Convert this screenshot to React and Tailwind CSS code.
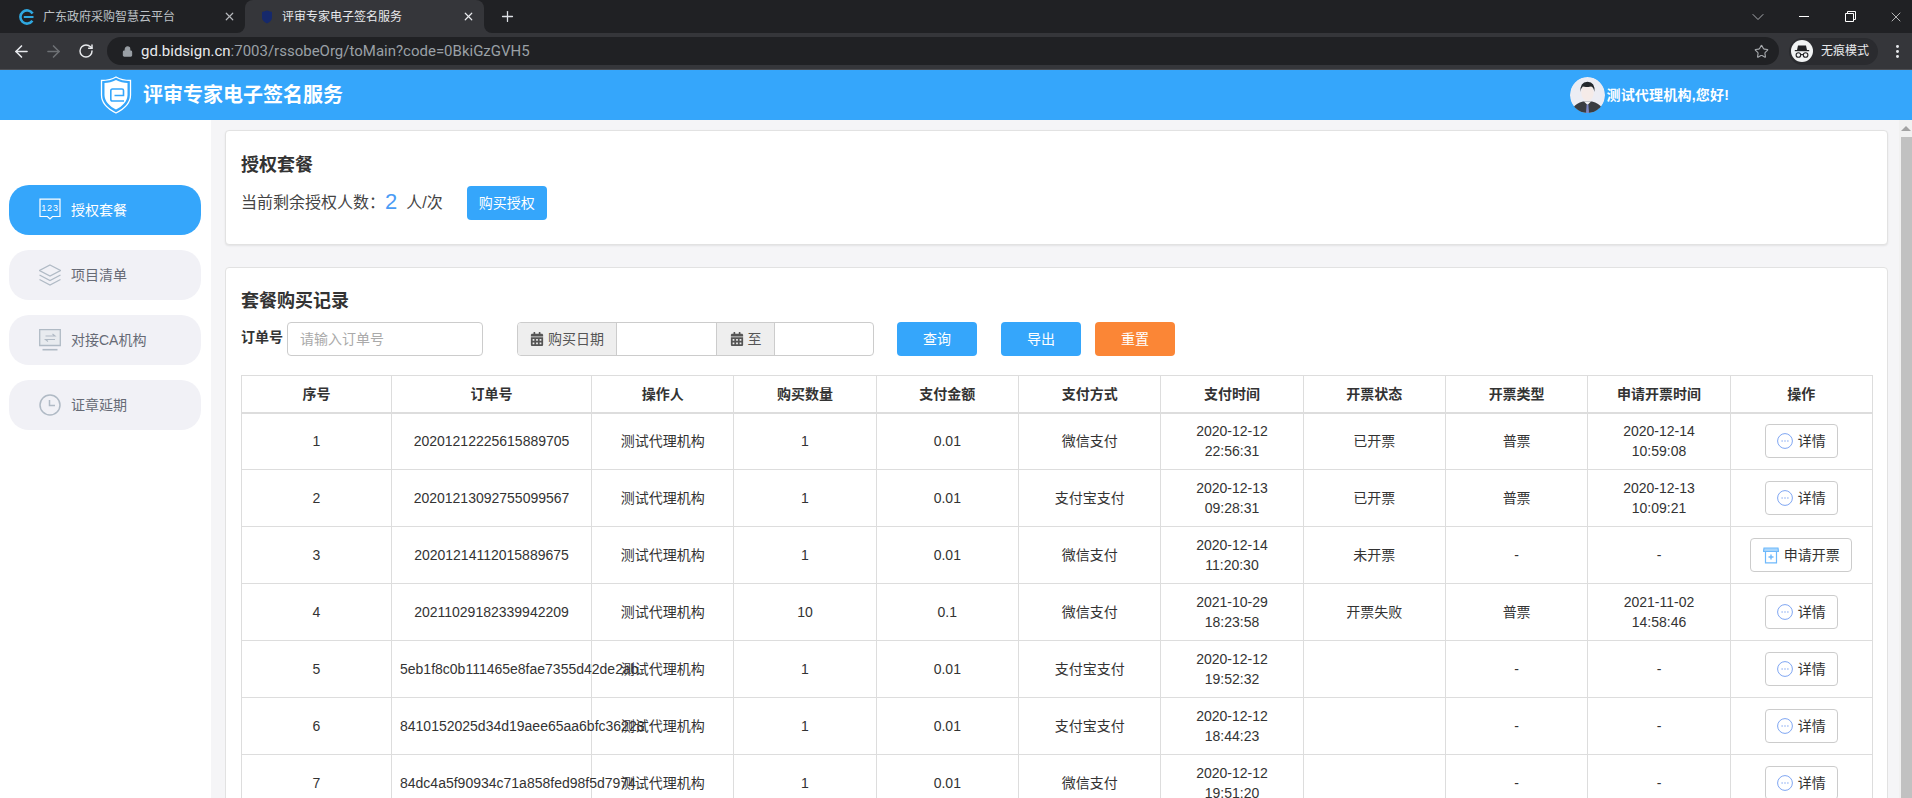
import React from "react";
import { ArrowLeft, ArrowRight, RotateCw, Star, X, Plus, Lock, ChevronDown, EllipsisVertical } from "lucide-react";
import { FaCalendarAlt } from "react-icons/fa";

const rows = [
  ["1", "20201212225615889705", "测试代理机构", "1", "0.01", "微信支付", "2020-12-12 22:56:31", "已开票", "普票", "2020-12-14 10:59:08", "d"],
  ["2", "20201213092755099567", "测试代理机构", "1", "0.01", "支付宝支付", "2020-12-13 09:28:31", "已开票", "普票", "2020-12-13 10:09:21", "d"],
  ["3", "20201214112015889675", "测试代理机构", "1", "0.01", "微信支付", "2020-12-14 11:20:30", "未开票", "-", "-", "a"],
  ["4", "20211029182339942209", "测试代理机构", "10", "0.1", "微信支付", "2021-10-29 18:23:58", "开票失败", "普票", "2021-11-02 14:58:46", "d"],
  ["5", "5eb1f8c0b111465e8fae7355d42de2ab", "测试代理机构", "1", "0.01", "支付宝支付", "2020-12-12 19:52:32", "", "-", "-", "d"],
  ["6", "8410152025d34d19aee65aa6bfc36228", "测试代理机构", "1", "0.01", "支付宝支付", "2020-12-12 18:44:23", "", "-", "-", "d"],
  ["7", "84dc4a5f90934c71a858fed98f5d7974", "测试代理机构", "1", "0.01", "微信支付", "2020-12-12 19:51:20", "", "-", "-", "d"],
];
const heads = ["序号", "订单号", "操作人", "购买数量", "支付金额", "支付方式", "支付时间", "开票状态", "开票类型", "申请开票时间", "操作"];

function Logo() {
  return (
    <svg width="32" height="38" viewBox="0 0 32 38">
      <path d="M16 1 C12 3.5 6 4.5 1.5 4.5 L1.5 19 C1.5 27 8 33 16 37 C24 33 30.5 27 30.5 19 L30.5 4.5 C26 4.5 20 3.5 16 1 Z" fill="none" stroke="#fff" strokeWidth="1.3" />
      <path d="M16 4 C12.5 6 8 7 4.5 7 L4.5 19 C4.5 25.5 10 30.5 16 33.5 C22 30.5 27.5 25.5 27.5 19 L27.5 7 C24 7 19.5 6 16 4 Z" fill="#fff" />
      <path d="M14.5 19.5 H23.5 V14.5 Q23.5 13 22 13 H12.5 Q10.8 13 10.8 14.8 V23.2 Q10.8 25 12.5 25 H24" fill="none" stroke="#35a6fb" strokeWidth="1.6" />
    </svg>
  );
}

function Avatar() {
  return (
    <svg width="35" height="36" viewBox="0 0 35 36" className="rounded-full">
      <ellipse cx="17.5" cy="18" rx="17.5" ry="18" fill="#ecedf4" />
      <path d="M3 31 Q6 26 13 24.5 L22 24.5 Q29 26 32 31 Q26 36 17.5 36 Q9 36 3 31 Z" fill="#3a3d42" />
      <path d="M14 24.5 L17.5 28 L21 24.5 Z" fill="#f2f2f4" />
      <path d="M16.6 27.5 H18.4 L19 36 H16 Z" fill="#7a86c4" />
      <ellipse cx="17.5" cy="15.5" rx="6.2" ry="8.6" fill="#f5ebe8" />
      <path d="M10.6 15 Q9.6 5 17.5 4.8 Q25.4 5 24.4 15 Q23.8 10 21 9.4 Q16 10.4 12.8 9.6 Q11 11 10.6 15 Z" fill="#24282c" />
    </svg>
  );
}

function Incognito() {
  return (
    <svg width="22" height="22" viewBox="0 0 22 22">
      <circle cx="11" cy="11" r="11" fill="#f1f3f4" />
      <path d="M7 5.5 H15 L16 10 H6 Z" fill="#202124" />
      <path d="M3.8 10.6 H18.2" stroke="#202124" strokeWidth="1.2" />
      <circle cx="7.4" cy="15" r="2.3" fill="none" stroke="#202124" strokeWidth="1.1" />
      <circle cx="14.6" cy="15" r="2.3" fill="none" stroke="#202124" strokeWidth="1.1" />
      <path d="M9.7 14.6 H12.3" stroke="#202124" strokeWidth="1.1" />
    </svg>
  );
}

function IconPackage() {
  return (
    <svg width="22" height="24" viewBox="0 0 22 24" fill="none" stroke="#fff" strokeWidth="1.2">
      <path d="M1 1.2 H21 V18.5 H13.5 L11 21 L8.5 18.5 H1 Z" />
      <text x="11" y="13" fill="#fff" stroke="none" fontSize="9" textAnchor="middle" fontFamily="Liberation Sans" letterSpacing="0.8">123</text>
    </svg>
  );
}
function IconLayers() {
  return (
    <svg width="22" height="22" viewBox="0 0 22 22" fill="none" stroke="#b0bac5" strokeWidth="1.3">
      <path d="M11 1 L21.5 6.5 L11 12 L0.5 6.5 Z" />
      <path d="M0.5 11 L11 16.5 L21.5 11" />
      <path d="M0.5 15.5 L11 21 L21.5 15.5" />
    </svg>
  );
}
function IconMonitor() {
  return (
    <svg width="22" height="22" viewBox="0 0 22 22" fill="none" stroke="#b0bac5" strokeWidth="1.3">
      <path d="M0.7 0.7 H21.3 V16.5 H0.7 Z" fill="#e8ebef" />
      <path d="M3.5 20.7 H18.5" strokeWidth="1.6" />
      <path d="M6.5 7 H16 L13.5 5 M16 10.5 H6.5 L9 12.5" strokeWidth="1.1" />
    </svg>
  );
}
function IconClock() {
  return (
    <svg width="22" height="22" viewBox="0 0 22 22" fill="none" stroke="#b0bac5" strokeWidth="1.5">
      <circle cx="11" cy="11" r="10" />
      <path d="M10.5 6 V11.5 H16" />
    </svg>
  );
}
function IconDetail() {
  return (
    <svg width="16" height="16" viewBox="0 0 16 16" fill="none" stroke="#7fa6f2" strokeWidth="1">
      <circle cx="8" cy="8" r="7.4" />
      <path d="M4.6 8 H5.6 M7.5 8 H8.5 M10.4 8 H11.4" strokeWidth="1.3" />
    </svg>
  );
}
function IconInvoice() {
  return (
    <svg width="16" height="17" viewBox="0 0 16 17" fill="none" stroke="#6fb9fb" strokeWidth="1.2">
      <path d="M1 1 H15 L15.5 4.5 H0.5 Z" fill="#a8d6fd" />
      <path d="M2.5 4.5 V15.8 H13.5 V4.5" />
      <path d="M8 7.5 V12.5 M5.5 10 H10.5" strokeWidth="1.4" />
    </svg>
  );
}

function NavItem({ icon, label, active }) {
  return (
    <div className={`flex h-[50px] items-center gap-[10px] rounded-[20px] pl-[30px] text-[14px] ${active ? "bg-[#35a6fb] text-white" : "bg-[#f1f1f6] text-[#666a75]"}`}>
      <span className="flex w-[22px] justify-center">{icon}</span>
      <span>{label}</span>
    </div>
  );
}

function Btn({ children, color, cls }) {
  return <button className={`flex h-[34px] w-[80px] items-center justify-center rounded-[4px] text-[14px] text-white ${color} ${cls || ""}`}>{children}</button>;
}

function Addon({ w, label }) {
  return (
    <div className={`flex h-full items-center justify-center gap-[4px] border-r border-[#ccc] bg-[#eee] text-[14px] text-[#555] ${w}`}>
      <FaCalendarAlt size={14} color="#555" />
      <span>{label}</span>
    </div>
  );
}

export default function App() {
  return (
    <div className="flex h-[798px] w-[1912px] flex-col overflow-hidden bg-white font-['Liberation_Sans','Noto_Sans_CJK_SC',sans-serif] text-[#333]">
      {/* tab strip */}
      <div className="flex h-[33px] shrink-0 bg-[#35363a] text-[12px]">
        <div className="flex w-[245px] items-center rounded-br-[8px] bg-[#202124] pl-[19px] text-[#bdc1c6]">
          <svg width="16" height="16" viewBox="0 0 16 16" fill="none">
            <path d="M13.6 4.5 A6.6 6.6 0 1 0 13.4 11.8" stroke="#2fa8e0" strokeWidth="2.6" />
            <path d="M4.8 8 H14.5" stroke="#2fa8e0" strokeWidth="2" />
          </svg>
          <span className="ml-[8px] w-[177px]">广东政府采购智慧云平台</span>
          <X size={13} strokeWidth={2.2} color="#b5b8bc" className="ml-[3px]" />
        </div>
        <div className="w-[239px] bg-[#202124]">
          <div className="flex h-full items-center rounded-t-[8px] bg-[#35363a] pl-[16px] text-[#e8eaed]">
            <svg width="12" height="14" viewBox="0 0 12 14"><path d="M6 0.5 L11 2 V7.5 Q11 11 6 13.5 Q1 11 1 7.5 V2 Z" fill="#16296b" /></svg>
            <span className="ml-[9px] w-[180px]">评审专家电子签名服务</span>
            <X size={13} strokeWidth={2.2} color="#e8eaed" />
          </div>
        </div>
        <div className="flex flex-1 items-center rounded-bl-[8px] bg-[#202124] text-[#e8eaed]">
          <Plus size={17} strokeWidth={1.8} className="ml-[15px]" color="#dee1e6" />
          <div className="flex-1" />
          <div className="flex w-[46px] justify-center"><ChevronDown size={20} strokeWidth={1} color="#c4c7cb" /></div>
          <div className="flex w-[46px] justify-center"><div className="h-px w-[10px] bg-white" /></div>
          <div className="flex w-[46px] justify-center">
            <svg width="11" height="11" viewBox="0 0 11 11" fill="none" stroke="#fff" strokeWidth="1"><path d="M0.5 2.5 H8.5 V10.5 H0.5 Z" /><path d="M2.5 2.5 V0.5 H10.5 V8.5 H8.5" /></svg>
          </div>
          <div className="flex w-[39px] justify-center pl-[7px]"><X size={16} strokeWidth={1} color="#fff" /></div>
        </div>
      </div>
      {/* toolbar */}
      <div className="flex h-[37px] shrink-0 items-center border-b border-[#4d4e52] bg-[#35363a]">
        <div className="flex w-[42px] shrink-0 justify-center"><ArrowLeft size={19} strokeWidth={2} color="#e8eaed" /></div>
        <div className="flex w-[23px] shrink-0 justify-center"><ArrowRight size={19} strokeWidth={2} color="#6e7175" /></div>
        <div className="flex w-[42px] shrink-0 justify-center"><RotateCw size={16} strokeWidth={2.2} color="#e8eaed" /></div>
        <div className="flex h-[28px] w-[1672px] shrink-0 items-center rounded-full bg-[#202124] pl-[15px] pr-[10px] font-['Roboto','Liberation_Sans',sans-serif] text-[15px]">
          <Lock size={11} color="#9aa0a6" fill="#9aa0a6" strokeWidth={2.4} />
          <span className="ml-[8px] text-[#e8eaed]">gd.bidsign.cn</span>
          <span className="text-[#9aa0a6]">:7003/rssobeOrg/toMain?code=0BkiGzGVH5</span>
          <div className="flex-1" />
          <Star size={15} color="#a6a9ad" strokeWidth={1.8} />
        </div>
        <div className="ml-[10px] flex h-[27px] w-[89px] shrink-0 items-center rounded-full bg-[#2a2b2f] pl-[2px]">
          <Incognito />
          <span className="ml-[8px] text-[12px] text-[#e8eaed]">无痕模式</span>
        </div>
        <div className="flex w-[34px] shrink-0 justify-center pl-[4px]"><EllipsisVertical size={17} strokeWidth={2.2} color="#e8eaed" /></div>
      </div>
      {/* header */}
      <div className="flex h-[50px] shrink-0 items-center bg-[#35a6fb] text-white">
        <div className="ml-[100px]"><Logo /></div>
        <div className="ml-[11px] text-[20px] font-bold">评审专家电子签名服务</div>
        <div className="flex-1" />
        <Avatar />
        <div className="ml-[1px] mr-[183px] text-[14px] font-bold tracking-[0.2px]">测试代理机构,您好!</div>
      </div>
      {/* body */}
      <div className="flex min-h-0 flex-1">
        <aside className="flex w-[211px] shrink-0 flex-col gap-[15px] bg-white pl-[9px] pr-[10px] pt-[65px]">
          <NavItem active icon={<IconPackage />} label="授权套餐" />
          <NavItem icon={<IconLayers />} label="项目清单" />
          <NavItem icon={<IconMonitor />} label="对接CA机构" />
          <NavItem icon={<IconClock />} label="证章延期" />
        </aside>
        <main className="flex min-w-0 flex-1 flex-col gap-[22px] overflow-hidden bg-[#f5f5f7] pl-[14px] pr-[11px] pt-[10px]">
          <section className="h-[115px] shrink-0 rounded-[4px] border border-[#e2e2e2] bg-white px-[15px] pt-[22px] shadow-[0_1px_2px_rgba(0,0,0,0.08)]">
            <h2 className="text-[18px] font-bold leading-[24px] text-[#333]">授权套餐</h2>
            <div className="mt-[9px] flex h-[34px] items-center text-[16px] text-[#444]">
              <span>当前剩余授权人数：</span>
              <span className="mb-[3px] mr-[9px] text-[22px] leading-none text-[#4a9cf5]">2</span>
              <span>人/次</span>
              <Btn color="bg-[#35a6fb]" cls="ml-[24px]">购买授权</Btn>
            </div>
          </section>
          <section className="shrink-0 rounded-[4px] border border-[#e2e2e2] bg-white px-[15px] pt-[21px]">
            <h2 className="text-[18px] font-bold leading-[24px] text-[#333]">套餐购买记录</h2>
            <div className="mt-[9px] flex h-[34px] items-center">
              <label className="w-[46px] pb-[4px] text-[14px] font-bold text-[#333]">订单号</label>
              <input placeholder="请输入订单号" className="h-[34px] w-[196px] rounded-[4px] border border-[#ccc] px-[12px] text-[14px] placeholder:text-[#aaa]" />
              <div className="ml-[34px] flex h-[34px] w-[357px] items-center overflow-hidden rounded-[4px] border border-[#ccc]">
                <Addon w="w-[99px]" label="购买日期" />
                <div className="h-full w-[100px] border-r border-[#ccc]" />
                <Addon w="w-[58px]" label="至" />
                <div className="h-full flex-1" />
              </div>
              <Btn color="bg-[#35a6fb]" cls="ml-[23px]">查询</Btn>
              <Btn color="bg-[#35a6fb]" cls="ml-[24px]">导出</Btn>
              <Btn color="bg-[#fb8636]" cls="ml-[14px]">重置</Btn>
            </div>
            <table className="mt-[19px] w-[1631px] table-fixed border-collapse text-center text-[14px] leading-[20px] text-[#333]">
              <colgroup>
                <col className="w-[150px]" />
                <col className="w-[200px]" />
                {heads.slice(2).map((h) => <col key={h} className="w-[142.33px]" />)}
              </colgroup>
              <thead>
                <tr className="h-[37px]">
                  {heads.map((h) => <th key={h} className="border border-b-2 border-[#ddd] px-2 font-bold">{h}</th>)}
                </tr>
              </thead>
              <tbody>
                {rows.map((r) => (
                  <tr key={r[0]} className="h-[57px]">
                    {r.slice(0, 10).map((c, i) => <td key={i} className="border border-[#ddd] px-2">{c}</td>)}
                    <td className="border border-[#ddd] px-2">
                      {r[10] === "d" ? (
                        <button className="mx-auto flex h-[34px] w-[73px] items-center justify-center gap-[5px] rounded-[4px] border border-[#ccc] bg-white text-[14px] text-[#333]"><IconDetail />详情</button>
                      ) : (
                        <button className="mx-auto flex h-[34px] w-[102px] items-center justify-center gap-[5px] rounded-[4px] border border-[#ccc] bg-white text-[14px] text-[#333]"><IconInvoice />申请开票</button>
                      )}
                    </td>
                  </tr>
                ))}
              </tbody>
            </table>
          </section>
        </main>
        <div className="flex w-[13px] shrink-0 flex-col bg-[#f1f1f1]">
          <div className="flex h-[17px] justify-end pr-[1px] pt-[6px]">
            <div className="h-0 w-0 border-x-[5px] border-b-[5px] border-x-transparent border-b-[#a3a3a3]" />
          </div>
          <div className="ml-[2px] flex-1 bg-[#c1c1c1]" />
        </div>
      </div>
    </div>
  );
}
